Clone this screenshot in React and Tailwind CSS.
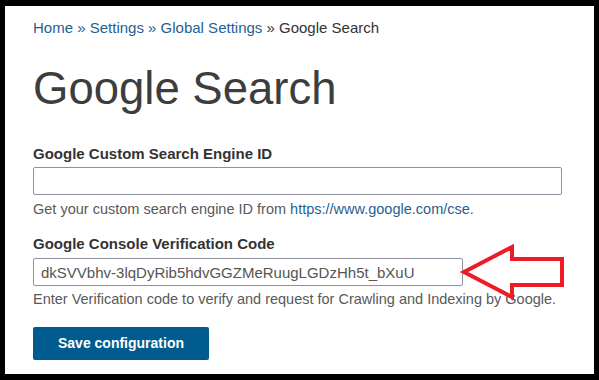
import React from 'react';

/**
 * Google Search settings page with the red callout arrow
 */
function App() {
  const font = { fontFamily: '"Liberation Sans", Arial, sans-serif' };

  return (
    <div className="relative w-[599px] h-[380px] bg-black pt-[6px] pl-[5px] pr-[5px] pb-[6px]" style={font}>
      <div className="h-full bg-white pl-[28px] pr-[32px] pt-[12px]">
        {/* Breadcrumb */}
        <div className="text-[15px] leading-[20px] text-[#333]">
          <a href="#" className="text-[#1f5f92]">Home</a>
          <span className="text-[#1f5f92]"> » </span>
          <a href="#" className="text-[#1f5f92]">Settings</a>
          <span className="text-[#1f5f92]"> » </span>
          <a href="#" className="text-[#1f5f92]">Global Settings</a>
          <span className="text-[#333]"> » </span>
          <span>Google Search</span>
        </div>

        <h1 className="mt-[28px] text-[45.5px] leading-[46px] text-[#3d3d3d] font-normal">Google Search</h1>

        {/* Custom search engine id */}
        <label className="block mt-[32px] text-[15px] leading-[20px] font-bold text-[#333]">
          Google Custom Search Engine ID
        </label>
        <input
          type="text"
          className="block mt-[3px] w-[529px] h-[28px] border border-[#8f8f9d] rounded-[2px] px-[7px] text-[15px] text-[#555] outline-none"
        />
        <p className="mt-[4px] text-[14.5px] leading-[20px] text-[#595959]">
          Get your custom search engine ID from <a href="#" className="text-[#1f5f92]">https://www.google.com/cse</a>.
        </p>

        {/* Console verification code */}
        <label className="block mt-[15px] text-[15px] leading-[20px] font-bold text-[#333]">
          Google Console Verification Code
        </label>
        <input
          type="text"
          defaultValue="dkSVVbhv-3lqDyRib5hdvGGZMeRuugLGDzHh5t_bXuU"
          className="block mt-[4px] w-[430px] h-[28px] border border-[#8f8f9d] rounded-[2px] pl-[7px] text-[15px] text-[#555] outline-none"
          style={font}
        />
        <p className="mt-[3px] text-[14.5px] leading-[20px] text-[#595959] whitespace-nowrap">
          Enter Verification code to verify and request for Crawling and Indexing by Google.
        </p>

        <button className="mt-[18px] w-[176px] h-[33px] bg-[#005b8e] rounded-[2px] text-white text-[14px] font-bold">
          Save configuration
        </button>
      </div>

      {/* Red callout arrow */}
      <svg className="absolute inset-0 pointer-events-none" width="599" height="380" viewBox="0 0 599 380">
        <polygon
          points="464,272 512,247 512,259 562,259 562,285 512,285 512,297"
          fill="none"
          stroke="#ed1c24"
          strokeWidth="4"
          strokeLinejoin="miter"
        />
      </svg>
    </div>
  );
}

export default App;
